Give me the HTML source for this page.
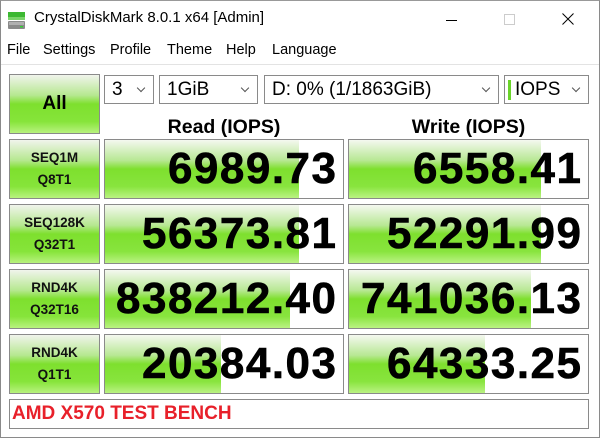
<!DOCTYPE html>
<html><head><style>
*{margin:0;padding:0;box-sizing:border-box}
body{width:600px;height:441px;background:#fff;font-family:"Liberation Sans",sans-serif;position:relative;overflow:hidden}
.win{position:absolute;left:0;top:0;width:600px;height:438px;border:1px solid #8a8a8a;border-top:1px solid #999}
.abs{position:absolute}
.title{left:34px;top:9px;font-size:15px;color:#000}
.menu{top:42px;font-size:14.5px;color:#000}
.sep{left:1px;right:1px;top:64px;height:1px;background:#e3e3e3}
.g{border:1px solid #8a8a8a;background:linear-gradient(#f0f4ec 0%,#b6e890 35%,#7ee02e 50%,#86e43a 80%,#b8f27e 100%)}
.lbl{display:flex;flex-direction:column;align-items:center;justify-content:center;font-weight:bold;font-size:13.5px;line-height:22px;color:#111}
.cell{border:1px solid #8a8a8a;background:#fff;overflow:hidden}
.bar{position:absolute;left:0;top:0;bottom:0;background:linear-gradient(#f4f8f0 0%,#b8e894 35%,#7ee02e 50%,#88e43e 80%,#baf282 100%)}
.num{position:absolute;right:7px;top:3px;font-weight:bold;font-size:44px;letter-spacing:1.5px;margin-right:-1.5px;color:#000;line-height:52px;-webkit-text-stroke:0.6px #000}
.combo{border:1px solid #8a8a8a;background:#fff;height:29px;font-size:19px;padding-left:7px;line-height:27px}
.combo:after{content:"";position:absolute;right:9px;top:9px;width:5px;height:5px;border-right:1px solid #555;border-bottom:1px solid #555;transform:rotate(45deg)}
.hdr{font-weight:bold;font-size:19.5px;top:116px}
</style></head><body>
<div class="win"></div>
<svg class="abs" style="left:7px;top:11px" width="20" height="20" viewBox="0 0 20 20"><rect x="1" y="1" width="17" height="5" fill="#3cb832"/><rect x="1" y="6" width="17" height="3" fill="#7ad46a"/><rect x="1" y="10" width="17" height="8" rx="1" fill="#8a8a8a"/><rect x="2" y="11" width="15" height="3" fill="#b0b0b0"/><rect x="13" y="15" width="3" height="1.5" fill="#3c3"/></svg>
<div class="abs title">CrystalDiskMark 8.0.1 x64 [Admin]</div>
<div class="abs" style="left:446px;top:20px;width:11px;height:1px;background:#000"></div>
<div class="abs" style="left:504px;top:14px;width:11px;height:11px;border:1px solid #ccc"></div>
<svg class="abs" style="left:562px;top:13px" width="12" height="12"><path d="M0.5 0.5L11.5 11.5M11.5 0.5L0.5 11.5" stroke="#000" stroke-width="1"/></svg>
<div class="abs menu" style="left:7px">File</div>
<div class="abs menu" style="left:43px">Settings</div>
<div class="abs menu" style="left:110px">Profile</div>
<div class="abs menu" style="left:167px">Theme</div>
<div class="abs menu" style="left:226px">Help</div>
<div class="abs menu" style="left:272px">Language</div>
<div class="abs sep"></div>
<div class="abs g" style="left:9px;top:74px;width:91px;height:60px;display:flex;align-items:center;justify-content:center;font-weight:bold;font-size:19px">All</div>
<div class="abs combo" style="left:104px;top:75px;width:50px">3</div>
<div class="abs combo" style="left:159px;top:75px;width:99px">1GiB</div>
<div class="abs combo" style="left:264px;top:75px;width:235px">D: 0% (1/1863GiB)</div>
<div class="abs combo" style="left:504px;top:75px;width:85px;padding-left:10px">IOPS</div>
<div class="abs" style="left:508px;top:80px;width:3px;height:20px;background:#6ad42a"></div>
<div class="abs hdr" style="left:104px;width:240px;text-align:center">Read (IOPS)</div>
<div class="abs hdr" style="left:348px;width:241px;text-align:center">Write (IOPS)</div>

<div class="abs g lbl" style="left:9px;top:139px;width:91px;height:60px"><div>SEQ1M</div><div>Q8T1</div></div>
<div class="abs cell" style="left:104px;top:139px;width:240px;height:60px"><div class="bar" style="width:194px"></div><div class="num">6989.73</div></div>
<div class="abs cell" style="left:348px;top:139px;width:241px;height:60px"><div class="bar" style="width:192px"></div><div class="num">6558.41</div></div>

<div class="abs g lbl" style="left:9px;top:204px;width:91px;height:60px"><div>SEQ128K</div><div>Q32T1</div></div>
<div class="abs cell" style="left:104px;top:204px;width:240px;height:60px"><div class="bar" style="width:194px"></div><div class="num">56373.81</div></div>
<div class="abs cell" style="left:348px;top:204px;width:241px;height:60px"><div class="bar" style="width:192px"></div><div class="num">52291.99</div></div>

<div class="abs g lbl" style="left:9px;top:269px;width:91px;height:60px"><div>RND4K</div><div>Q32T16</div></div>
<div class="abs cell" style="left:104px;top:269px;width:240px;height:60px"><div class="bar" style="width:185px"></div><div class="num">838212.40</div></div>
<div class="abs cell" style="left:348px;top:269px;width:241px;height:60px"><div class="bar" style="width:182px"></div><div class="num">741036.13</div></div>

<div class="abs g lbl" style="left:9px;top:334px;width:91px;height:60px"><div>RND4K</div><div>Q1T1</div></div>
<div class="abs cell" style="left:104px;top:334px;width:240px;height:60px"><div class="bar" style="width:116px"></div><div class="num">20384.03</div></div>
<div class="abs cell" style="left:348px;top:334px;width:241px;height:60px"><div class="bar" style="width:136px"></div><div class="num">64333.25</div></div>

<div class="abs" style="left:9px;top:399px;width:580px;height:30px;border:1px solid #8a8a8a;color:#e8202a;font-weight:bold;font-size:19px;line-height:28px;padding-left:2px">AMD X570 TEST BENCH</div>
</body></html>
